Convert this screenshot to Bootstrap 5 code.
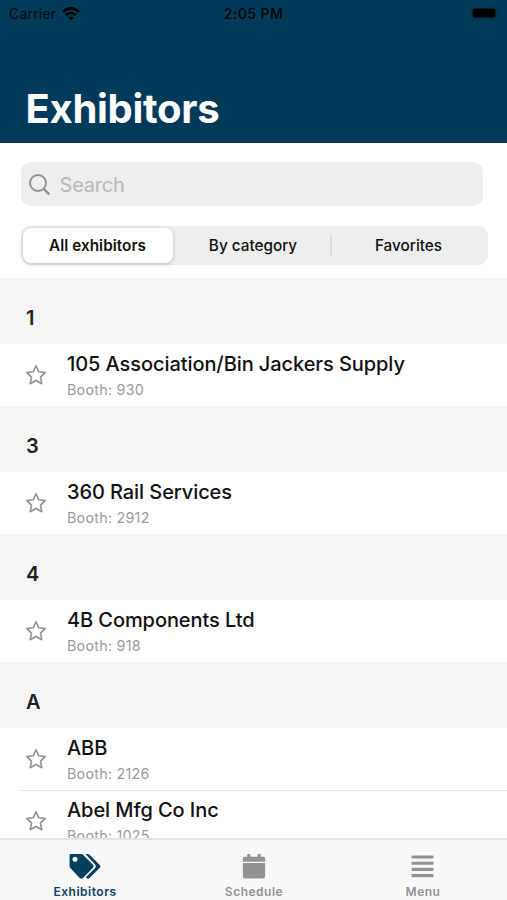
<!DOCTYPE html>
<html lang="en">
<head>
<meta charset="utf-8">
<meta name="viewport" content="width=device-width, initial-scale=1">
<title>Exhibitors</title>
<link rel="stylesheet" href="https://cdn.jsdelivr.net/npm/bootstrap@5.3.0/dist/css/bootstrap.min.css">
<style>
body{font-family:Inter,"Liberation Sans",sans-serif;height:900px;color:#111}
.app-head{background:#023b59;height:142.5px;flex:none}
.status{height:28px;font-size:14px;line-height:28px;color:#02090e;padding-left:9px;padding-right:5px}
.status>div{flex:1 1 0}
.status .carrier{letter-spacing:.2px}
.status .wifi{margin-left:6px}
.status .clock{font-weight:600;letter-spacing:.4px;margin-left:-4px}
.app-title{font-size:40px;line-height:48px;font-weight:700;letter-spacing:-.3px;padding-left:25.5px;margin-top:57px}
.tools{height:135.9px;flex:none;padding:19.5px 19.5px 0 20.5px}
.search{height:44px;background:#eee;border-radius:10px;margin-right:4.5px;padding:1px 0 0 7px;color:#b9b9b9;font-size:20px;letter-spacing:-.2px}
.segments{height:39px;background:#eee;border-radius:10px;margin-top:19.5px;font-size:15.3px;font-weight:500;padding:2px}
.segments>div{flex:1 1 0;padding-top:2px}
.segments .chosen{flex:0 0 150px;height:35px;background:#fff;border-radius:8px;box-shadow:0 1px 4px rgba(0,0,0,.22);font-weight:600;letter-spacing:.05px}
.segments .middle{flex:0 0 157px;padding-left:4px}
.rule{width:2px;height:22px;background:#ddd;flex:none!important}
.group-head{height:66px;background:#f5f5f5;font-size:20px;font-weight:600;line-height:30px;padding:25px 0 0 26px;color:#222;flex:none}
.entry{height:61.8px;flex:none;padding-left:25px}
.entry .star{width:22px;height:22px;margin-top:20px;flex:none}
.entry .label{margin-left:20px;flex:1;padding-top:6px}
.entry .name{font-size:20px;line-height:28px;font-weight:500;letter-spacing:-.08px;color:#111;white-space:nowrap}
.entry .booth{font-size:14.3px;line-height:20px;color:#9b9b9b;margin-top:2px;letter-spacing:.25px}
.split{height:1px;background:#e9e9e9;margin-left:20px;margin-bottom:-1px;flex:none}
.tabs{height:62px;flex:none;background:#f8f8f8;border-top:2px solid #e4e4e4;color:#929292;font-size:12px;font-weight:600;letter-spacing:.5px}
.tabs>div{flex:1 1 0;padding:12px 0 0 1px}
.tabs svg{height:30px}
.tabs span{line-height:16px;margin-top:3px}
.tabs .on{color:#073f5e}
</style>
<script src="https://cdn.jsdelivr.net/npm/bootstrap@5.3.0/dist/js/bootstrap.bundle.min.js"></script>
</head>
<body class="d-flex flex-column overflow-hidden bg-white">
<svg class="d-none"><symbol id="star" viewBox="0 0 22 22"><path d="M11 1.800 13.800 7.800 20.300 8.600 15.500 13.100 16.800 19.700 11 16.500 5.200 19.700 6.500 13.100 1.700 8.600 8.200 7.800Z" fill="none" stroke="#929292" stroke-width="1.6" stroke-linejoin="round"/></symbol></svg>
<header class="app-head">
  <div class="status d-flex">
    <div class="carrier d-flex align-items-center"><span>Carrier</span>
      <svg class="wifi" width="18" height="14" viewBox="0 0 18 14" fill="none" stroke="#000" stroke-width="2.6"><path d="M1 5.1Q9-2.2 17 5.1M4 8.3Q9 3.6 14 8.3"/><path d="M6.3 10.6Q9 8.2 11.7 10.6L9 13.5Z" fill="#000" stroke="none"/></svg>
    </div>
    <div class="clock text-center">2:05 PM</div>
    <div class="d-flex justify-content-end align-items-center">
      <svg width="32" height="14" viewBox="0 0 32 14"><rect x="1" y="0" width="26" height="12" rx="3" fill="none" stroke="#03304a"/><rect x="2.7" y="1.600" width="22.8" height="9" rx="1.5"/><path d="M28.5 4q2 2 0 4" fill="#03283d"/></svg>
    </div>
  </div>
  <h1 class="app-title text-white mb-0">Exhibitors</h1>
</header>
<section class="tools">
  <div class="search d-flex align-items-center"><svg width="24" height="24" viewBox="0 0 24 24" fill="none" stroke="#929292" stroke-width="2"><circle cx="10" cy="10" r="8"/><path d="m15.800 15.800 5.500 5.500" stroke-width="2.4"/></svg><span class="ms-2">Search</span></div>
  <div class="segments d-flex align-items-center text-center">
    <div class="chosen d-flex align-items-center justify-content-center">All exhibitors</div>
    <div class="middle">By category</div><div class="rule"></div><div>Favorites</div>
  </div>
</section>
<main class="d-flex flex-column flex-grow-1 overflow-hidden">
  <div class="group-head">1</div>
  <div class="entry d-flex"><svg class="star"><use href="#star"/></svg><div class="label"><div class="name">105 Association/Bin Jackers Supply</div><div class="booth">Booth: 930</div></div></div>
  <div class="group-head">3</div>
  <div class="entry d-flex"><svg class="star"><use href="#star"/></svg><div class="label"><div class="name">360 Rail Services</div><div class="booth">Booth: 2912</div></div></div>
  <div class="group-head">4</div>
  <div class="entry d-flex"><svg class="star"><use href="#star"/></svg><div class="label"><div class="name">4B Components Ltd</div><div class="booth">Booth: 918</div></div></div>
  <div class="group-head">A</div>
  <div class="entry d-flex"><svg class="star"><use href="#star"/></svg><div class="label"><div class="name">ABB</div><div class="booth">Booth: 2126</div></div></div>
  <div class="split"></div>
  <div class="entry d-flex"><svg class="star"><use href="#star"/></svg><div class="label"><div class="name">Abel Mfg Co Inc</div><div class="booth">Booth: 1025</div></div></div>
</main>
<nav class="tabs d-flex">
  <div class="on d-flex flex-column align-items-center"><svg width="34" height="30" viewBox="0 0 34 30"><path fill="#073f5e" fill-rule="evenodd" d="M2.500 2H13q1.300 0 2.200 1l10 10q1.600 1.700 0 3.400L15 26.800q-1.700 1.600-3.400 0L2 16.700Q1 15.800 1 14.500V3.500Q1 2 2.500 2ZM6.700 5a2.600 2.600 0 1 0 0 5.200 2.600 2.600 0 0 0 0-5.200Z"/><path fill="#073f5e" d="M17.500 2h2.200q1.200 0 2 .9l10.400 10.200q1.700 1.700 0 3.400L21.800 26.800q-1.600 1.500-3.300 0l-.6-.6 9.300-9.400q2-2.100 0-4.200Z"/></svg><span>Exhibitors</span></div>
  <div class="d-flex flex-column align-items-center"><svg width="26" height="30" viewBox="0 0 26 30" fill="#929292"><path d="M1.500 10V6.800Q1.500 5 3.300 5H6V2.600Q6 2 6.600 2h2Q9.200 2 9.200 2.600V5h7.600V2.600Q16.800 2 17.400 2h2q.6 0 .6.600V5h2.700q1.800 0 1.800 1.800V10ZM1.500 11.500h23v13.700q0 2.300-2.300 2.300H3.800q-2.300 0-2.300-2.300Z"/></svg><span>Schedule</span></div>
  <div class="d-flex flex-column align-items-center"><svg width="24" height="30" viewBox="0 0 24 30" fill="#929292"><rect x=".2" y="3.600" width="22.600" height="3.200" rx=".6"/><rect x=".2" y="10" width="22.600" height="3.200" rx=".6"/><rect x=".2" y="16.400" width="22.600" height="3.200" rx=".6"/><rect x=".2" y="22.800" width="22.600" height="3.200" rx=".6"/></svg><span>Menu</span></div>
</nav>
</body>
</html>
